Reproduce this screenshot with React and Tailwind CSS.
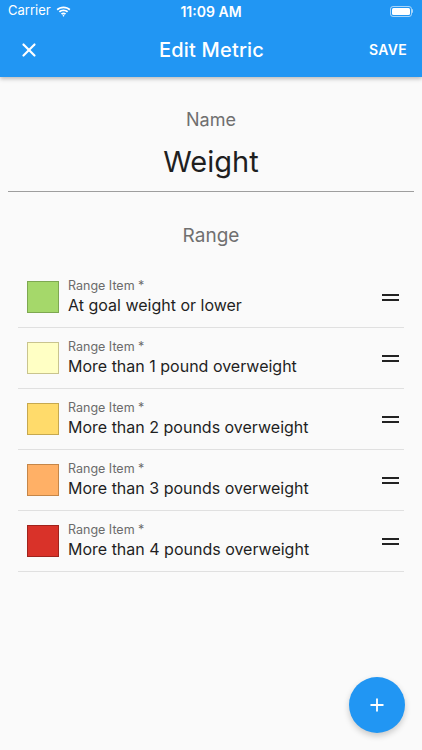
import { X, Plus } from 'lucide-react';

const ranges = [
  { label: 'At goal weight or lower', fill: 'bg-[#a5d86a]', border: 'border-[#7ea851]' },
  { label: 'More than 1 pound overweight', fill: 'bg-[#ffffc4]', border: 'border-[#c9c48e]' },
  { label: 'More than 2 pounds overweight', fill: 'bg-[#ffdb6b]', border: 'border-[#c6a84f]' },
  { label: 'More than 3 pounds overweight', fill: 'bg-[#ffb066]', border: 'border-[#c58648]' },
  { label: 'More than 4 pounds overweight', fill: 'bg-[#d93229]', border: 'border-[#a0231c]' },
];

function StatusBar() {
  return (
    <div className="h-[22px] flex items-center justify-between px-[8px] text-white">
      <div className="flex items-center gap-[5px] w-[120px]">
        <span className="text-[13px]">Carrier</span>
        <svg width="15" height="11" viewBox="0 0 15 11" fill="white">
          <path d="M7.5 2.2c2.2 0 4.2.8 5.7 2.2l1.2-1.3C12.6 1.4 10.2.4 7.5.4S2.4 1.4.6 3.1l1.2 1.3C3.3 3 5.3 2.2 7.5 2.2z" />
          <path d="M7.5 5.3c1.3 0 2.5.5 3.5 1.3l1.2-1.3C11 4.2 9.3 3.5 7.5 3.5S4 4.2 2.8 5.3L4 6.6c1-.8 2.2-1.3 3.5-1.3z" />
          <path d="M7.5 8.2c.5 0 1 .2 1.3.5l1.3-1.3c-.7-.6-1.6-1-2.6-1s-1.9.4-2.6 1l1.3 1.3c.3-.3.8-.5 1.3-.5zM7.5 10.8l1-1-1-1-1 1z" />
        </svg>
      </div>
      <span className="text-[14px] font-semibold">11:09 AM</span>
      <div className="w-[120px] flex justify-end pr-[1px]">
        <div className="flex items-center">
          <div className="w-[22px] h-[11px] rounded-[3px] border border-white/60 p-[1px]">
            <div className="w-full h-full bg-white rounded-[1.5px]" />
          </div>
          <div className="w-[1.5px] h-[4px] bg-white/60 rounded-r" />
        </div>
      </div>
    </div>
  );
}

function Handle() {
  return (
    <div className="flex flex-col gap-[3px] w-[17px]">
      <div className="h-[2px] bg-[#222]" />
      <div className="h-[2px] bg-[#222]" />
    </div>
  );
}

export default function App() {
  return (
    <div className="w-[422px] h-[750px] bg-[#fafafa] relative overflow-hidden" style={{ fontFamily: 'Inter, "Noto Sans", sans-serif' }}>
      <div className="bg-[#2196f3] shadow-[0_2px_4px_rgba(0,0,0,0.25)] relative z-10">
        <StatusBar />
        <div className="h-[55px] flex items-center justify-between pl-[18px] pr-[15px] text-white">
          <X className="w-[22px] h-[22px]" strokeWidth={2.4} />
          <span className="text-[20px] font-medium ml-[14px] tracking-[0.2px]">Edit Metric</span>
          <span className="text-[14px] font-semibold tracking-[0.3px]">SAVE</span>
        </div>
      </div>

      <div className="flex flex-col items-center pt-[32px]">
        <span className="text-[18px] text-[#6f6f6f] leading-[22px]">Name</span>
        <span className="text-[29px] text-[#1f1f1f] leading-[36px] mt-[13px]">Weight</span>
      </div>
      <div className="mx-[8px] mt-[11px] h-[1px] bg-[#9e9e9e]" />

      <div className="flex justify-center mt-[32px]">
        <span className="text-[19px] text-[#707070] leading-[24px]">Range</span>
      </div>

      <div className="mx-[18px] mt-[19px]">
        {ranges.map((r) => (
          <div key={r.label} className="h-[61px] flex items-center border-b border-[#e0e0e0] pl-[9px] pr-[5px]">
            <div className={`w-[32px] h-[32px] border ${r.fill} ${r.border}`} />
            <div className="flex flex-col ml-[9px] flex-1">
              <span className="text-[12.5px] text-[#6b6b6b] leading-[16px]">Range Item *</span>
              <span className="text-[16px] text-[#1f1f1f] leading-[22px]">{r.label}</span>
            </div>
            <Handle />
          </div>
        ))}
      </div>

      <button className="absolute left-[349px] top-[677px] w-[56px] h-[56px] rounded-full bg-[#2196f3] flex items-center justify-center shadow-[0_3px_6px_rgba(0,0,0,0.2)]">
        <Plus className="w-[20px] h-[20px] text-white" strokeWidth={2.2} />
      </button>
    </div>
  );
}
